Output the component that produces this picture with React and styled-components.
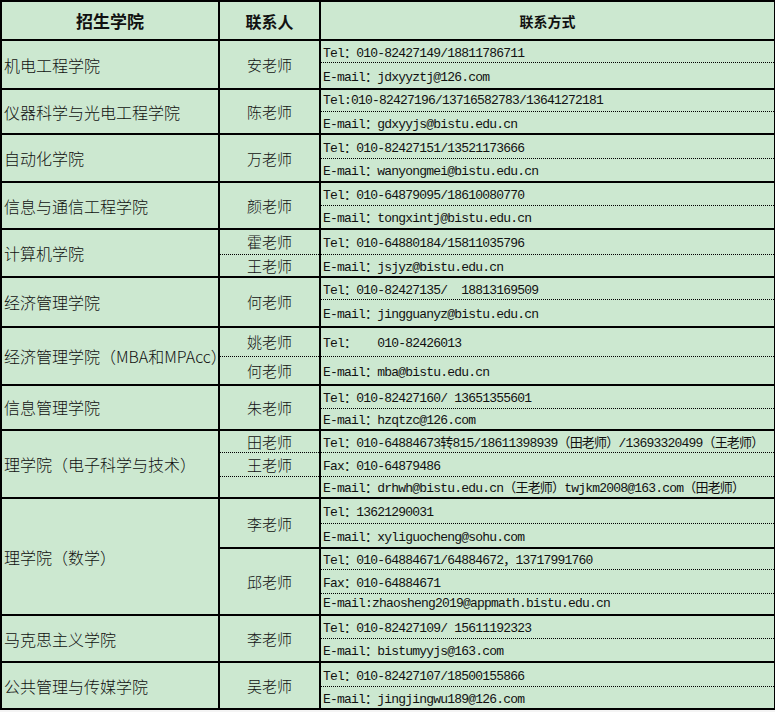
import styled, { createGlobalStyle } from "styled-components"

const GlobalStyle = createGlobalStyle`
    body {
        margin: 0;
        background: #f4f4f4;
    }
`

const Table = styled.table`
    border-collapse: collapse;
    table-layout: fixed;
    width: 774px;
    background: #cce8d0;
    border: 2px solid #000;
    color: #111;
`
const Row = styled.tr`
    height: ${p => p.$h}px;
`
const Th = styled.th`
    border-right: 2px solid #000;
    border-bottom: 2px solid #000;
    padding: 0;
    font-family: "Noto Sans CJK SC", sans-serif;
    font-weight: 700;
    font-size: ${p => p.$size}px;
    text-align: center;
`
const College = styled.td`
    border-right: 2px solid #000;
    border-bottom: 2px solid #000;
    padding: 0 0 0 2px;
    font-family: "Noto Sans CJK SC", sans-serif;
    font-weight: 300;
    font-size: 16px;
    white-space: nowrap;
    vertical-align: middle;
`
const Person = styled.td`
    border-right: 2px solid #000;
    border-bottom: ${p => p.$sep === "dotted" ? "1px dotted #000" : "2px solid #000"};
    padding: 0;
    font-family: "Noto Sans CJK SC", sans-serif;
    font-weight: 300;
    font-size: 15px;
    text-align: center;
    vertical-align: middle;
`
const Contact = styled.td`
    border-bottom: ${p => p.$sep === "dotted" ? "1px dotted #000" : "2px solid #000"};
    padding: 0 0 0 2px;
    font-family: "Liberation Mono", "Noto Sans CJK SC", monospace;
    font-size: 13px;
    letter-spacing: -0.8px;
    white-space: pre;
    vertical-align: middle;
    overflow: hidden;
`

const groups = [
    { college: "机电工程学院", heights: [22, 27], people: [{ name: "安老师", span: 2 }],
      contacts: ["Tel：010-82427149/18811786711", "E-mail：jdxyyztj@126.com"] },
    { college: "仪器科学与光电工程学院", heights: [22, 23], people: [{ name: "陈老师", span: 2 }],
      contacts: ["Tel:010-82427196/13716582783/13641272181", "E-mail：gdxyyjs@bistu.edu.cn"] },
    { college: "自动化学院", heights: [24, 24], people: [{ name: "万老师", span: 2 }],
      contacts: ["Tel：010-82427151/13521173666", "E-mail：wanyongmei@bistu.edu.cn"] },
    { college: "信息与通信工程学院", heights: [23, 24], people: [{ name: "颜老师", span: 2 }],
      contacts: ["Tel：010-64879095/18610080770", "E-mail：tongxintj@bistu.edu.cn"] },
    { college: "计算机学院", heights: [25, 22], sep: "dotted",
      people: [{ name: "霍老师", span: 1 }, { name: "王老师", span: 1 }],
      contacts: ["Tel：010-64880184/15811035796", "E-mail：jsjyz@bistu.edu.cn"] },
    { college: "经济管理学院", heights: [23, 27], people: [{ name: "何老师", span: 2 }],
      contacts: ["Tel：010-82427135/  18813169509", "E-mail：jingguanyz@bistu.edu.cn"] },
    { college: "经济管理学院（MBA和MPAcc）", heights: [30, 28], sep: "dotted",
      people: [{ name: "姚老师", span: 1 }, { name: "何老师", span: 1 }],
      contacts: ["Tel：   010-82426013", "E-mail：mba@bistu.edu.cn"] },
    { college: "信息管理学院", heights: [24, 21], people: [{ name: "朱老师", span: 2 }],
      contacts: ["Tel：010-82427160/ 13651355601", "E-mail：hzqtzc@126.com"] },
    { college: "理学院（电子科学与技术）", heights: [22, 24, 22], sep: "dotted",
      people: [{ name: "田老师", span: 1 }, { name: "王老师", span: 1 }, { name: "", span: 1 }],
      contacts: [
          "Tel：010-64884673转815/18611398939（田老师）/13693320499（王老师）",
          "Fax：010-64879486",
          "E-mail：drhwh@bistu.edu.cn（王老师）twjkm2008@163.com（田老师）",
      ] },
    { college: "理学院（数学）", heights: [25, 25, 21, 24, 22], sep: "solid", breaks: [1],
      people: [{ name: "李老师", span: 2 }, { name: "邱老师", span: 3 }],
      contacts: [
          "Tel：13621290031",
          "E-mail：xyliguocheng@sohu.com",
          "Tel：010-64884671/64884672，13717991760",
          "Fax：010-64884671",
          "E-mail:zhaosheng2019@appmath.bistu.edu.cn",
      ] },
    { college: "马克思主义学院", heights: [23, 24], people: [{ name: "李老师", span: 2 }],
      contacts: ["Tel：010-82427109/ 15611192323", "E-mail：bistumyyjs@163.com"] },
    { college: "公共管理与传媒学院", heights: [24, 23], people: [{ name: "吴老师", span: 2 }],
      contacts: ["Tel：010-82427107/18500155866", "E-mail：jingjingwu189@126.com"] },
]

// which person cell starts on a given sub-row
const personAt = (g, i) => {
    let start = 0
    for (let k = 0; k < g.people.length; k++) {
        if (start === i) return { ...g.people[k], last: k === g.people.length - 1 }
        start += g.people[k].span
    }
    return null
}

const Group = ({ g }) => g.heights.map((h, i) => {
    const p = personAt(g, i)
    const last = i === g.heights.length - 1
    const breakHere = (g.breaks || []).includes(i)
    return (
        <Row key={i} $h={h}>
            {i === 0 && <College rowSpan={g.heights.length}>{g.college}</College>}
            {p && <Person rowSpan={p.span} $sep={p.last ? "solid" : g.sep}>{p.name}</Person>}
            <Contact $sep={last || breakHere ? "solid" : "dotted"}>{g.contacts[i]}</Contact>
        </Row>
    )
})

const App = () => {
    return <>
        <GlobalStyle />
        <Table>
            <colgroup>
                <col style={{ width: 218 }} />
                <col style={{ width: 101 }} />
                <col style={{ width: 455 }} />
            </colgroup>
            <tbody>
                <Row $h={39}>
                    <Th $size={17}>招生学院</Th>
                    <Th $size={16}>联系人</Th>
                    <Th $size={14}>联系方式</Th>
                </Row>
                {groups.map((g, i) => <Group key={i} g={g} />)}
            </tbody>
        </Table>
    </>
}

export default App
